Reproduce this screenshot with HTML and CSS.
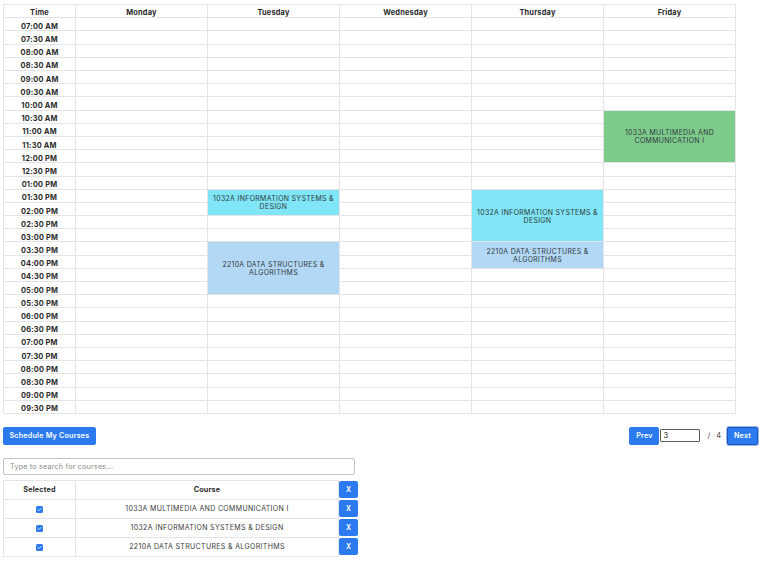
FILE: index.html
```html
<!DOCTYPE html>
<html>
<head>
<meta charset="utf-8">
<link rel="stylesheet" href="styles.css">
</head>
<body>
<table class="sched">
  <colgroup><col class="c-time"><col class="c-day"><col class="c-day"><col class="c-day"><col class="c-day"><col class="c-day"></colgroup>
  <thead>
    <tr><th>Time</th><th>Monday</th><th>Tuesday</th><th>Wednesday</th><th>Thursday</th><th>Friday</th></tr>
  </thead>
  <tbody>
    <tr><th>07:00 AM</th><td></td><td></td><td></td><td></td><td></td></tr>
    <tr><th>07:30 AM</th><td></td><td></td><td></td><td></td><td></td></tr>
    <tr><th>08:00 AM</th><td></td><td></td><td></td><td></td><td></td></tr>
    <tr><th>08:30 AM</th><td></td><td></td><td></td><td></td><td></td></tr>
    <tr><th>09:00 AM</th><td></td><td></td><td></td><td></td><td></td></tr>
    <tr><th>09:30 AM</th><td></td><td></td><td></td><td></td><td></td></tr>
    <tr><th>10:00 AM</th><td></td><td></td><td></td><td></td><td></td></tr>
    <tr><th>10:30 AM</th><td></td><td></td><td></td><td></td><td rowspan="4" class="ev green">1033A MULTIMEDIA AND COMMUNICATION I</td></tr>
    <tr><th>11:00 AM</th><td></td><td></td><td></td><td></td></tr>
    <tr><th>11:30 AM</th><td></td><td></td><td></td><td></td></tr>
    <tr><th>12:00 PM</th><td></td><td></td><td></td><td></td></tr>
    <tr><th>12:30 PM</th><td></td><td></td><td></td><td></td><td></td></tr>
    <tr><th>01:00 PM</th><td></td><td></td><td></td><td></td><td></td></tr>
    <tr><th>01:30 PM</th><td></td><td rowspan="2" class="ev cyan">1032A INFORMATION SYSTEMS &amp; DESIGN</td><td></td><td rowspan="4" class="ev cyan">1032A INFORMATION SYSTEMS &amp; DESIGN</td><td></td></tr>
    <tr><th>02:00 PM</th><td></td><td></td><td></td></tr>
    <tr><th>02:30 PM</th><td></td><td></td><td></td><td></td></tr>
    <tr><th>03:00 PM</th><td></td><td></td><td></td><td></td></tr>
    <tr><th>03:30 PM</th><td></td><td rowspan="4" class="ev blue">2210A DATA STRUCTURES &amp; ALGORITHMS</td><td></td><td rowspan="2" class="ev blue">2210A DATA STRUCTURES &amp; ALGORITHMS</td><td></td></tr>
    <tr><th>04:00 PM</th><td></td><td></td><td></td></tr>
    <tr><th>04:30 PM</th><td></td><td></td><td></td><td></td></tr>
    <tr><th>05:00 PM</th><td></td><td></td><td></td><td></td></tr>
    <tr><th>05:30 PM</th><td></td><td></td><td></td><td></td><td></td></tr>
    <tr><th>06:00 PM</th><td></td><td></td><td></td><td></td><td></td></tr>
    <tr><th>06:30 PM</th><td></td><td></td><td></td><td></td><td></td></tr>
    <tr><th>07:00 PM</th><td></td><td></td><td></td><td></td><td></td></tr>
    <tr><th>07:30 PM</th><td></td><td></td><td></td><td></td><td></td></tr>
    <tr><th>08:00 PM</th><td></td><td></td><td></td><td></td><td></td></tr>
    <tr><th>08:30 PM</th><td></td><td></td><td></td><td></td><td></td></tr>
    <tr><th>09:00 PM</th><td></td><td></td><td></td><td></td><td></td></tr>
    <tr><th>09:30 PM</th><td></td><td></td><td></td><td></td><td></td></tr>
  </tbody>
</table>

<div class="controls">
  <button class="btn">Schedule My Courses</button>
  <div class="pager">
    <button class="btn">Prev</button>
    <input class="page-input" type="text" value="3">
    <span class="slash">/</span>
    <span class="total">4</span>
    <button class="btn btn-focus">Next</button>
  </div>
</div>

<input class="search" type="text" placeholder="Type to search for courses...">

<table class="courses">
  <colgroup><col class="c-sel"><col class="c-course"><col class="c-x"></colgroup>
  <thead>
    <tr><th>Selected</th><th>Course</th><td class="xcell"><button class="xbtn">X</button></td></tr>
  </thead>
  <tbody>
    <tr><td><span class="chk"><svg viewBox="0 0 8 8" width="7" height="7"><path d="M2.2 4.2 L3.4 5.3 L5.8 2.8" fill="none" stroke="#fff" stroke-width="0.9" stroke-linecap="round" stroke-linejoin="round"/></svg></span></td><td class="cname">1033A MULTIMEDIA AND COMMUNICATION I</td><td class="xcell"><button class="xbtn">X</button></td></tr>
    <tr><td><span class="chk"><svg viewBox="0 0 8 8" width="7" height="7"><path d="M2.2 4.2 L3.4 5.3 L5.8 2.8" fill="none" stroke="#fff" stroke-width="0.9" stroke-linecap="round" stroke-linejoin="round"/></svg></span></td><td class="cname">1032A INFORMATION SYSTEMS &amp; DESIGN</td><td class="xcell"><button class="xbtn">X</button></td></tr>
    <tr><td><span class="chk"><svg viewBox="0 0 8 8" width="7" height="7"><path d="M2.2 4.2 L3.4 5.3 L5.8 2.8" fill="none" stroke="#fff" stroke-width="0.9" stroke-linecap="round" stroke-linejoin="round"/></svg></span></td><td class="cname">2210A DATA STRUCTURES &amp; ALGORITHMS</td><td class="xcell"><button class="xbtn">X</button></td></tr>
  </tbody>
</table>
</body>
</html>
```

FILE: styles.css
```css
* { box-sizing: border-box; }
body {
  margin: 4px 3px;
  font-family: Inter, "Liberation Sans", sans-serif;
  color: #333;
  background: #fff;
}
.sched {
  border-collapse: collapse;
  table-layout: fixed;
  width: 732px;
}
.c-time { width: 72px; }
.c-day { width: 132px; }
.sched thead tr { height: 13.3px; }
.sched tbody tr { height: 13.2px; }
.sched th, .sched td {
  border: 1px solid #e4e4e8;
  padding: 0;
  font-size: 7.4px;
  line-height: 7px;
  text-align: center;
}
.sched th {
  font-weight: 700;
  color: #2a2a2a;
  letter-spacing: 0.2px;
}
.sched thead th { padding-top: 3px; }
.sched tbody th { padding-top: 4px; }
.ev {
  font-size: 6.9px !important;
  line-height: 8px !important;
  letter-spacing: 0.35px;
  color: #2f3a40;
  padding: 2px 4px 0 !important;
  vertical-align: middle;
}
.green { background: #7dca8b; }
.cyan { background: #80e5f6; }
.blue { background: #b3d8f5; }

.controls {
  width: 755px;
  margin-top: 13px;
  display: flex;
  justify-content: space-between;
  align-items: center;
}
.btn {
  background: #2b7af0;
  color: #fff;
  border: 1px solid #2b7af0;
  border-radius: 2px;
  font-family: Inter, "Liberation Sans", sans-serif;
  font-weight: 600;
  font-size: 7.2px;
  height: 18px;
  padding: 0 5.5px;
  letter-spacing: 0.2px;
}
.pager {
  display: flex;
  align-items: center;
}
.pager .btn { width: 30px; padding: 0; }
.page-input {
  width: 40px;
  height: 13px;
  margin-left: 1px;
  border: 1px solid #5a5a5a;
  border-radius: 1px;
  font-family: Inter, "Liberation Sans", sans-serif;
  font-size: 7.5px;
  padding: 0 2px;
  color: #222;
}
.slash { margin-left: 7px; font-size: 7.5px; color: #555; }
.total { margin-left: 6px; font-size: 7.5px; color: #555; }
.btn-focus {
  margin-left: 6px;
  width: 31px !important;
  border: 1px solid #1d55b8;
  box-shadow: 0 0 0 1px #9cbbea;
}
.search {
  display: block;
  margin-top: 13px;
  width: 352px;
  height: 17px;
  border: 1px solid #c4c4c8;
  border-radius: 2px;
  padding: 0 6px;
  font-family: Inter, "Liberation Sans", sans-serif;
  font-size: 7.2px;
  letter-spacing: 0.2px;
}
.search::placeholder { color: #8a8a8a; }
.courses {
  margin-top: 5px;
  border-collapse: collapse;
  table-layout: fixed;
  width: 355px;
}
.c-sel { width: 72px; }
.c-course { width: 263px; }
.c-x { width: 20px; }
.courses tr { height: 19px; }
.courses th, .courses td {
  border: 1px solid #e4e4e8;
  padding: 0;
  text-align: center;
  font-size: 7.2px;
}
.courses th { font-weight: 700; color: #2a2a2a; letter-spacing: 0.2px; }
.cname { color: #3a3a3a; letter-spacing: 0.35px; font-size: 7px !important; }
.courses td.xcell {
  border: none;
  padding: 0;
  vertical-align: middle;
}
.xbtn {
  display: block;
  width: 19px;
  height: 17px;
  background: #2b7af0;
  color: #fff;
  border: none;
  border-radius: 2px;
  font-family: Inter, "Liberation Sans", sans-serif;
  font-size: 7px;
  font-weight: 600;
  padding: 0;
}
.chk {
  display: inline-flex;
  width: 7px;
  height: 7px;
  background: #2b7af0;
  border-radius: 1.5px;
  vertical-align: middle;
}
.chk svg { display: block; }
```
